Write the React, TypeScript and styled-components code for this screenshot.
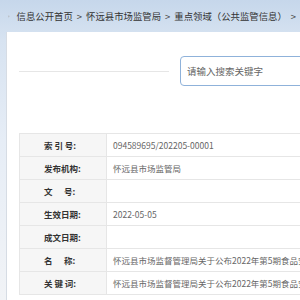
import React from "react";
import styled, { createGlobalStyle } from "styled-components";

const GlobalStyle = createGlobalStyle`
  html, body {
    margin: 0;
    padding: 0;
    overflow: hidden;
  }
  body {
    width: 300px;
    height: 300px;
    font-family: "Noto Sans CJK SC", "Noto Sans", sans-serif;
    background: linear-gradient(180deg, #c6d7eb 0px, #d7e3f1 40px, #e6edf6 140px, #f1f3f6 300px);
  }
`;

const Page = styled.div`
  width: 300px;
  height: 300px;
  padding-left: 6px;
  box-sizing: border-box;
  display: flex;
  flex-direction: column;
`;

const Crumbs = styled.div`
  height: 32px;
  display: flex;
  align-items: center;
  gap: 7px;
  padding-left: 2px;
  font-size: 9.4px;
  color: #333;
  white-space: nowrap;
`;

const Sep = styled.span`
  margin: 0 4px;
  color: #444;
`;

const Panel = styled.div`
  flex: 1;
  width: 480px;
  background: #fff;
  border-left: 1px solid #d6dce4;
  padding-left: 12px;
  display: flex;
  flex-direction: column;
`;

const SearchRow = styled.div`
  margin-top: 24px;
  height: 30px;
  display: flex;
  align-items: center;
  gap: 11px;
`;

const Rule = styled.div`
  width: 150px;
  height: 1px;
  background: #e6e6e6;
`;

const SearchBox = styled.input`
  width: 260px;
  height: 30px;
  box-sizing: border-box;
  border: 1px solid #8fb2da;
  border-radius: 4px;
  padding: 0 6px;
  font-family: inherit;
  font-size: 9.5px;
  color: #333;
  outline: none;
  &::placeholder {
    color: #666;
  }
`;

const Table = styled.table`
  margin-top: 47px;
  width: 420px;
  border-collapse: collapse;
  font-size: 8.5px;
`;

const Label = styled.td`
  width: 62px;
  height: 22px;
  padding: 0 0 0 24px;
  background: #f6f6f6;
  border: 1px solid #e6e6e6;
  color: #333;
  font-weight: bold;
  white-space: pre;
`;

const Value = styled.td`
  height: 22px;
  padding: 0 0 0 6px;
  border: 1px solid #e6e6e6;
  color: #666;
  white-space: nowrap;
`;

const PinIcon = () => (
  <svg width="8" height="11" viewBox="0 0 8 11">
    <path d="M4 0.5A3.5 3.5 0 0 0 0.5 4c0 2.6 3.5 6.5 3.5 6.5S7.5 6.6 7.5 4A3.5 3.5 0 0 0 4 0.5z" fill="#b3b6ba" />
    <circle cx="4" cy="4" r="1.3" fill="#d8e2ee" />
  </svg>
);

const rows: [string, string][] = [
  ["索 引 号:", "094589695/202205-00001"],
  ["发布机构:", "怀远县市场监管局"],
  ["文      号:", ""],
  ["生效日期:", "2022-05-05"],
  ["成文日期:", ""],
  ["名      称:", "怀远县市场监督管理局关于公布2022年第5期食品安全监督抽检信息的通告"],
  ["关 键 词:", "怀远县市场监督管理局关于公布2022年第5期食品安全监督抽检信息的通告"],
];

export default function App() {
  return (
    <>
      <GlobalStyle />
      <Page>
        <Crumbs>
          <PinIcon />
          <span>
            信息公开首页<Sep>&gt;</Sep>怀远县市场监管局<Sep>&gt;</Sep>重点领域（公共监管信息）<Sep>&gt;</Sep>
          </span>
        </Crumbs>
        <Panel>
          <SearchRow>
            <Rule />
            <SearchBox placeholder="请输入搜索关键字" />
          </SearchRow>
          <Table>
            <tbody>
              {rows.map(([k, v]) => (
                <tr key={k}>
                  <Label>{k}</Label>
                  <Value>{v}</Value>
                </tr>
              ))}
            </tbody>
          </Table>
        </Panel>
      </Page>
    </>
  );
}
